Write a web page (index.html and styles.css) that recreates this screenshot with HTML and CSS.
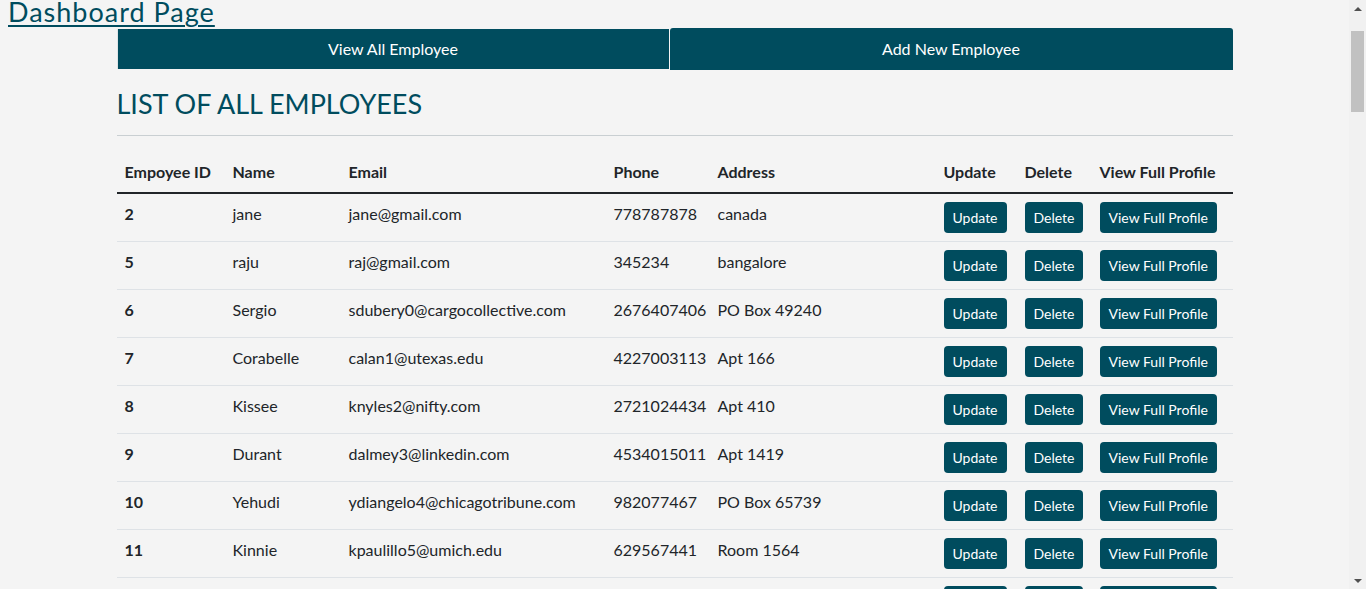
FILE: index.html
```html
<!DOCTYPE html>
<html lang="en">
<head>
<meta charset="utf-8">
<title>Dashboard Page</title>
<link rel="stylesheet" href="styles.css">
</head>
<body>
<div class="page">
  <h4 class="title"><a href="#">Dashboard Page</a></h4>
  <div class="container">
    <nav class="tabs">
      <a class="tab tab-first" href="#">View All Employee</a>
      <a class="tab tab-second" href="#">Add New Employee</a>
    </nav>
    <h3 class="heading">LIST OF ALL EMPLOYEES</h3>
    <hr class="rule">
    <table class="emp-table">
      <colgroup>
        <col class="c-id"><col class="c-name"><col class="c-email"><col class="c-phone"><col class="c-addr"><col class="c-upd"><col class="c-del"><col class="c-view">
      </colgroup>
      <thead>
        <tr><th>Empoyee ID</th><th>Name</th><th>Email</th><th>Phone</th><th>Address</th><th>Update</th><th>Delete</th><th>View Full Profile</th></tr>
      </thead>
      <tbody>
        <tr><th>2</th><td>jane</td><td>jane@gmail.com</td><td>778787878</td><td>canada</td><td><a class="btn" href="#">Update</a></td><td><a class="btn" href="#">Delete</a></td><td><a class="btn" href="#">View Full Profile</a></td></tr>
        <tr><th>5</th><td>raju</td><td>raj@gmail.com</td><td>345234</td><td>bangalore</td><td><a class="btn" href="#">Update</a></td><td><a class="btn" href="#">Delete</a></td><td><a class="btn" href="#">View Full Profile</a></td></tr>
        <tr><th>6</th><td>Sergio</td><td>sdubery0@cargocollective.com</td><td>2676407406</td><td>PO Box 49240</td><td><a class="btn" href="#">Update</a></td><td><a class="btn" href="#">Delete</a></td><td><a class="btn" href="#">View Full Profile</a></td></tr>
        <tr><th>7</th><td>Corabelle</td><td>calan1@utexas.edu</td><td>4227003113</td><td>Apt 166</td><td><a class="btn" href="#">Update</a></td><td><a class="btn" href="#">Delete</a></td><td><a class="btn" href="#">View Full Profile</a></td></tr>
        <tr><th>8</th><td>Kissee</td><td>knyles2@nifty.com</td><td>2721024434</td><td>Apt 410</td><td><a class="btn" href="#">Update</a></td><td><a class="btn" href="#">Delete</a></td><td><a class="btn" href="#">View Full Profile</a></td></tr>
        <tr><th>9</th><td>Durant</td><td>dalmey3@linkedin.com</td><td>4534015011</td><td>Apt 1419</td><td><a class="btn" href="#">Update</a></td><td><a class="btn" href="#">Delete</a></td><td><a class="btn" href="#">View Full Profile</a></td></tr>
        <tr><th>10</th><td>Yehudi</td><td>ydiangelo4@chicagotribune.com</td><td>982077467</td><td>PO Box 65739</td><td><a class="btn" href="#">Update</a></td><td><a class="btn" href="#">Delete</a></td><td><a class="btn" href="#">View Full Profile</a></td></tr>
        <tr><th>11</th><td>Kinnie</td><td>kpaulillo5@umich.edu</td><td>629567441</td><td>Room 1564</td><td><a class="btn" href="#">Update</a></td><td><a class="btn" href="#">Delete</a></td><td><a class="btn" href="#">View Full Profile</a></td></tr>
        <tr><th></th><td></td><td></td><td></td><td></td><td><a class="btn" href="#">Update</a></td><td><a class="btn" href="#">Delete</a></td><td><a class="btn" href="#">View Full Profile</a></td></tr>
      </tbody>
    </table>
  </div>
</div>
<div class="scrollbar" aria-hidden="true">
  <div class="sb-btn"><span class="arrow-up"></span></div>
  <div class="sb-track"><div class="sb-thumb"></div></div>
  <div class="sb-btn"><span class="arrow-down"></span></div>
</div>
</body>
</html>
```
FILE: styles.css
```css
body {
  margin: 0;
  background: #f4f4f4;
  color: #212529;
  font-family: "Segoe UI", Lato, "Noto Sans", sans-serif;
  font-size: 16px;
  line-height: 24px;
}

.page {
  margin-right: 17px;
}

.title {
  margin: 0 0 0 8px;
  font-size: 27px;
  font-weight: 400;
  letter-spacing: 1px;
  line-height: 23px;
  padding-bottom: 5px;
}
.title a {
  color: #004c5e;
  text-decoration: underline;
  text-underline-offset: 3px;
  text-decoration-thickness: 2px;
}

.container {
  width: 1116px;
  margin: 0 auto;
}

.tabs {
  display: flex;
  align-items: center;
  height: 42px;
}
.tab {
  display: flex;
  align-items: center;
  justify-content: center;
  background: #004c5e;
  color: #ffffff;
  text-decoration: none;
  font-size: 16px;
}
.tab-first {
  width: 551px;
  height: 40px;
  border-left: 1px solid #dfe5e7;
}
.tab-second {
  width: 563px;
  height: 42px;
  margin-left: 1px;
  border-radius: 3px 3px 0 0;
}

.heading {
  margin: 17px 0 0;
  color: #004c5e;
  font-size: 27px;
  font-weight: 400;
  line-height: 34px;
}

.rule {
  margin: 14px 0 16px;
  border: 0;
  border-top: 1px solid #c9cfd2;
  height: 0;
}

.emp-table {
  width: 1116px;
  border-collapse: collapse;
  table-layout: fixed;
}
.c-id { width: 108px; }
.c-name { width: 116px; }
.c-email { width: 265px; }
.c-phone { width: 104px; }
.c-addr { width: 226px; }
.c-upd { width: 81px; }
.c-del { width: 75px; }
.c-view { width: 141px; }

.emp-table th,
.emp-table td {
  padding: 8px;
  text-align: left;
  vertical-align: top;
  white-space: nowrap;
  border-bottom: 1px solid #dee2e6;
}
.emp-table th {
  font-weight: 700;
}
.emp-table thead th {
  border-bottom: 2px solid #212529;
}

.btn {
  display: inline-block;
  background: #004c5e;
  color: #ffffff;
  text-decoration: none;
  font-size: 14px;
  line-height: 21px;
  padding: 5px 9px;
  border-radius: 4px;
  vertical-align: top;
}

.scrollbar {
  position: fixed;
  top: 0;
  right: 0;
  width: 17px;
  height: 100vh;
  background: #f1f1f1;
  display: flex;
  flex-direction: column;
}
.sb-btn {
  height: 17px;
  display: flex;
  align-items: center;
  justify-content: center;
}
.arrow-up {
  width: 0;
  height: 0;
  border-left: 4px solid transparent;
  border-right: 4px solid transparent;
  border-bottom: 4px solid #505050;
}
.arrow-down {
  width: 0;
  height: 0;
  border-left: 4px solid transparent;
  border-right: 4px solid transparent;
  border-top: 4px solid #505050;
}
.sb-track {
  flex: 1;
  padding: 14px 2px 0;
}
.sb-thumb {
  height: 81px;
  background: #c1c1c1;
}
```
